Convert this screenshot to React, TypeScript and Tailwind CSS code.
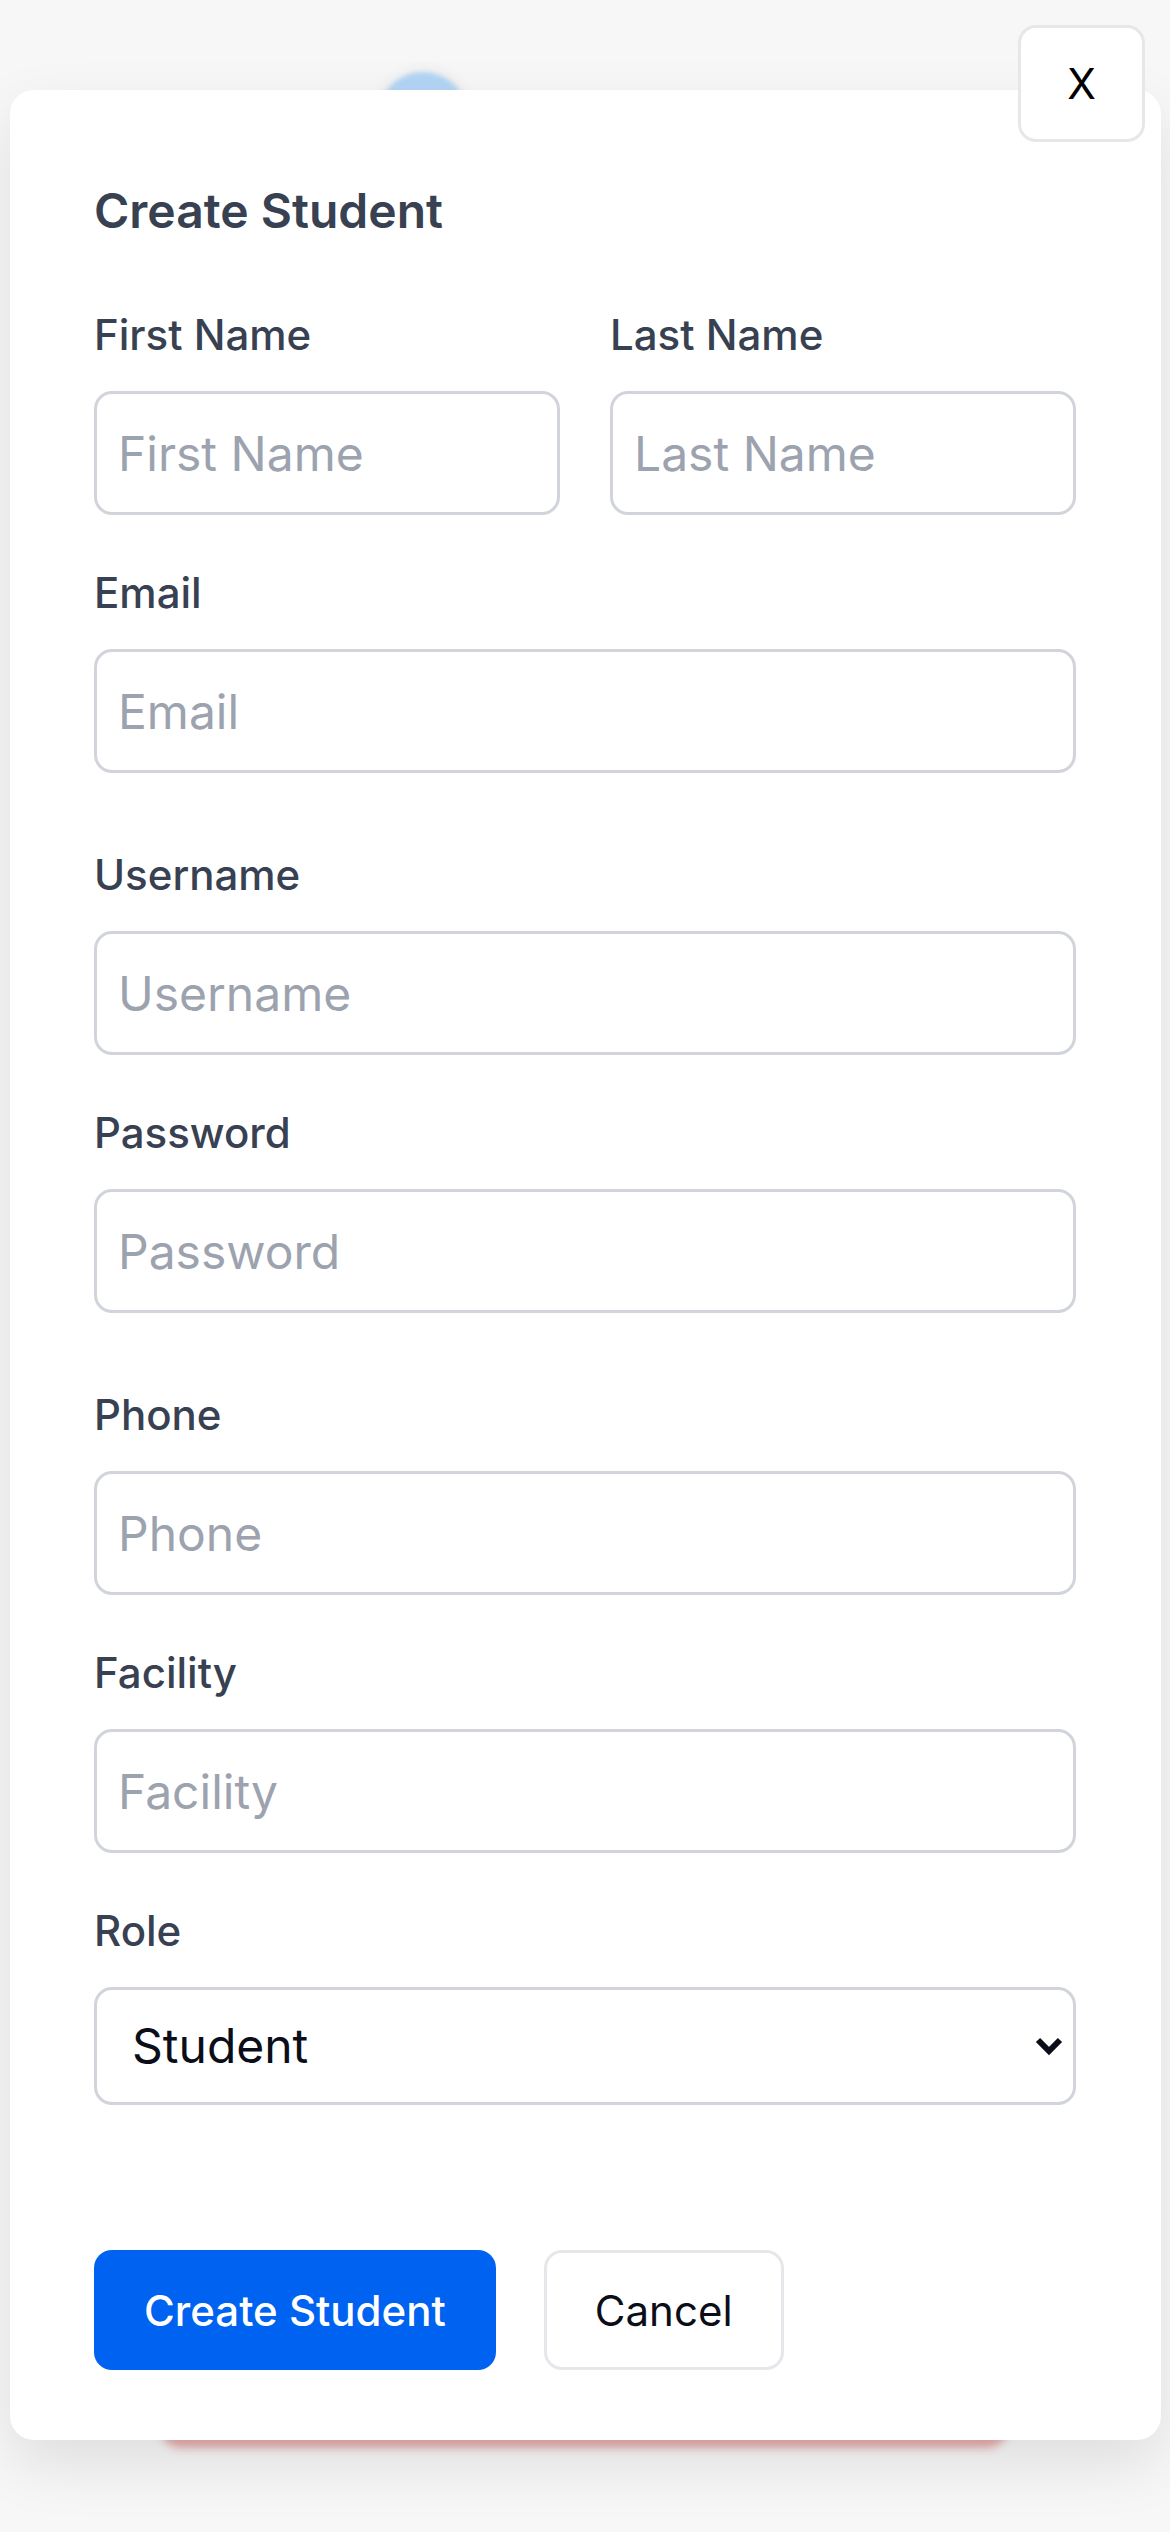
import { useState } from 'react';

interface FieldProps {
  label: string;
  placeholder: string;
  type?: string;
  className?: string;
}

function Field({ label, placeholder, type = 'text', className = '' }: FieldProps) {
  return (
    <div className={className}>
      <label className="block text-[42px] leading-[60px] font-medium text-[#374151] mb-[26px]">
        {label}
      </label>
      <input
        type={type}
        placeholder={placeholder}
        className="block w-full h-[124px] rounded-[18px] border-[3px] border-[#d1d5db] bg-white px-[21px] text-[48px] text-[#111827] placeholder:text-[#9ca3af] outline-none"
      />
    </div>
  );
}

export default function App() {
  const [role, setRole] = useState('student');

  return (
    <div className="relative min-h-[2532px] overflow-hidden bg-[#f7f7f7] pl-[10px] pr-[9px] pt-[90px] font-['Inter','Noto_Sans',sans-serif]">
      {/* blurred page content behind the modal */}
      <div className="absolute left-[378px] top-[72px] h-[92px] w-[90px] rounded-full bg-[#b3d5f5] blur-[2px] shadow-[0_0_16px_rgba(0,0,0,0.08)]" />
      <div className="absolute left-[158px] top-[2398px] h-[50px] w-[852px] rounded-[24px] bg-[#e5a9a9] blur-[4px]" />

      {/* Modal */}
      <div className="relative rounded-[24px] bg-white pl-[84px] pr-[85px] pt-[85px] pb-[70px] shadow-[0_24px_60px_rgba(0,0,0,0.10)]">
        <h2 className="text-[48px] leading-[72px] font-semibold text-[#374151] mb-[58px]">
          Create Student
        </h2>

        <div className="grid grid-cols-2 gap-[50px] mb-[48px]">
          <Field label="First Name" placeholder="First Name" />
          <Field label="Last Name" placeholder="Last Name" />
        </div>

        <Field label="Email" placeholder="Email" type="email" className="mb-[72px]" />
        <Field label="Username" placeholder="Username" className="mb-[48px]" />
        <Field label="Password" placeholder="Password" type="password" className="mb-[72px]" />
        <Field label="Phone" placeholder="Phone" className="mb-[48px]" />
        <Field label="Facility" placeholder="Facility" className="mb-[48px]" />

        {/* Role */}
        <div>
          <label className="block text-[42px] leading-[60px] font-medium text-[#374151] mb-[26px]">
            Role
          </label>
          <div className="relative">
            <select
              value={role}
              onChange={(e) => setRole(e.target.value)}
              className="block w-full h-[118px] appearance-none rounded-[18px] border-[3px] border-[#d1d5db] bg-white pl-[35px] pr-[70px] text-[48px] text-[#0b0e18] outline-none"
            >
              <option value="student">Student</option>
              <option value="instructor">Instructor</option>
              <option value="admin">Admin</option>
            </select>
            <svg
              className="pointer-events-none absolute right-[12px] top-1/2 -translate-y-1/2"
              width="30"
              height="20"
              viewBox="0 0 30 20"
              fill="none"
            >
              <path d="M4 4 L15 15 L26 4" stroke="#0b0e18" strokeWidth="6" />
            </svg>
          </div>
        </div>

        {/* Action Buttons */}
        <div className="flex gap-[48px] mt-[145px]">
          <button className="h-[120px] rounded-[18px] bg-[#0062f0] px-[50px] text-[42px] font-medium text-white">
            Create Student
          </button>
          <button className="h-[120px] rounded-[18px] border-[3px] border-[#e5e7eb] bg-white px-[48px] text-[42px] text-[#0b0e18]">
            Cancel
          </button>
        </div>
      </div>

      {/* Close button */}
      <button className="absolute right-[25px] top-[25px] flex h-[117px] w-[127px] items-center justify-center rounded-[18px] border-[3px] border-[#e5e7eb] bg-white text-[42px] text-black">
        X
      </button>
    </div>
  );
}
